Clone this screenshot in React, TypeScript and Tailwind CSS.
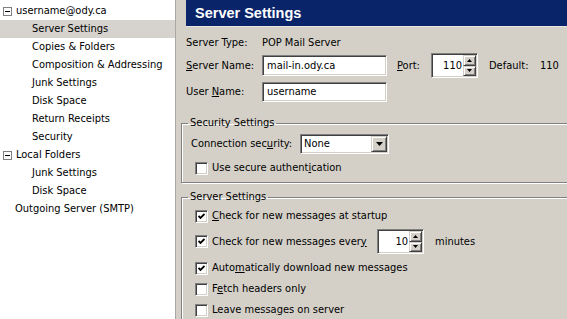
import React from 'react';

const font = { fontFamily: '"DejaVu Sans Condensed", "Liberation Sans", sans-serif' };

const sunken =
  'border border-t-[#808080] border-l-[#808080] border-b-white border-r-white shadow-[inset_1px_1px_0_#404040,inset_-1px_-1px_0_#d4d0c8] bg-white';
const raised =
  'bg-[#d4d0c8] border border-t-[#d4d0c8] border-l-[#d4d0c8] border-b-[#404040] border-r-[#404040] shadow-[inset_1px_1px_0_white,inset_-1px_-1px_0_#808080]';

function Minus() {
  return (
    <span className="w-[9px] h-[9px] border border-[#808080] bg-white flex items-center justify-center mr-[4px]">
      <span className="w-[5px] h-px bg-black" />
    </span>
  );
}

function Sidebar() {
  const child = 'h-[18px] flex items-center pl-[32px]';
  return (
    <div className="w-[176px] shrink-0 bg-white border-r border-[#a9a7a2] pt-[2px] text-black">
      <div className="h-[18px] flex items-center pl-[3px]">
        <Minus />
        username@ody.ca
      </div>
      <div className={child + ' bg-[#d6d3ce]'}>Server Settings</div>
      <div className={child}>Copies &amp; Folders</div>
      <div className={child}>Composition &amp; Addressing</div>
      <div className={child}>Junk Settings</div>
      <div className={child}>Disk Space</div>
      <div className={child}>Return Receipts</div>
      <div className={child}>Security</div>
      <div className="h-[18px] flex items-center pl-[3px]">
        <Minus />
        Local Folders
      </div>
      <div className={child}>Junk Settings</div>
      <div className={child}>Disk Space</div>
      <div className="h-[18px] flex items-center pl-[15px]">Outgoing Server (SMTP)</div>
    </div>
  );
}

function Arrow({ up }: { up?: boolean }) {
  return (
    <svg width="5" height="3" viewBox="0 0 5 3">
      <path d={up ? 'M2.5 0 L5 3 L0 3 Z' : 'M0 0 L5 0 L2.5 3 Z'} fill="black" />
    </svg>
  );
}

function Spinner({ value }: { value: string }) {
  return (
    <div className={sunken + ' w-[47px] h-[25px] flex p-px'}>
      <div className="flex-1 flex items-center justify-end pr-[1px]">{value}</div>
      <div className="w-[13px] flex flex-col">
        <div className={raised + ' flex-1 flex items-center justify-center'}>
          <Arrow up />
        </div>
        <div className={raised + ' flex-1 flex items-center justify-center'}>
          <Arrow />
        </div>
      </div>
    </div>
  );
}

function Check({ checked }: { checked?: boolean }) {
  return (
    <span className={sunken + ' w-[13px] h-[13px] shrink-0 flex items-center justify-center'}>
      {checked && (
        <svg width="7" height="7" viewBox="0 0 7 7">
          <path d="M0.5 3 L2.5 5 L6.5 1" stroke="black" strokeWidth="1.8" fill="none" />
        </svg>
      )}
    </span>
  );
}

function CheckRow({ checked, children, className = '' }: { checked?: boolean; children: React.ReactNode; className?: string }) {
  return (
    <div className={'flex items-center h-[14px] ml-[7px] ' + className}>
      <Check checked={checked} />
      <span className="ml-[4px]">{children}</span>
    </div>
  );
}

const groupBox = 'border border-[#808080] shadow-[1px_1px_0_white,inset_1px_1px_0_white] pl-[6px] w-[420px]';

export default function App() {
  return (
    <div className="w-[567px] h-[319px] flex overflow-hidden bg-[#d4d0c8] text-[11px] leading-[14px]" style={font}>
      <Sidebar />
      <div className="flex-1 pl-[10px] overflow-hidden text-black">
        <div className="h-[27px] bg-[#0a246a] border-b border-[#e8e6e2] w-[400px] flex items-center pl-[9px]">
          <span className="text-white font-bold text-[14.5px]" style={{ fontFamily: '"Liberation Sans", sans-serif' }}>
            Server Settings
          </span>
        </div>

        <div className="flex items-center h-[14px] mt-[9px]">
          <span className="w-[76px]">Server Type:</span>
          <span>POP Mail Server</span>
        </div>

        <div className="flex items-center h-[25px] mt-[3px]">
          <span className="w-[76px]">
            <u>S</u>erver Name:
          </span>
          <div className={sunken + ' w-[125px] h-[21px] flex items-center pl-[4px]'}>mail-in.ody.ca</div>
          <span className="ml-[10px] w-[34px]">
            <u>P</u>ort:
          </span>
          <Spinner value="110" />
          <span className="ml-[11px] w-[51px]">Default:</span>
          <span>110</span>
        </div>

        <div className="flex items-center h-[21px] mt-[3px]">
          <span className="w-[76px]">
            User <u>N</u>ame:
          </span>
          <div className={sunken + ' w-[125px] h-[20px] flex items-center pl-[4px]'}>username</div>
        </div>

        <fieldset className={groupBox + ' ml-[-5px] mt-[14px] pb-[7px]'}>
          <legend className="px-[2px]">Security Settings</legend>
          <div className="flex items-center h-[20px] mt-[4px] ml-[3px]">
            <span className="w-[109px]">
              Connection sec<u>u</u>rity:
            </span>
            <div className={sunken + ' w-[89px] h-[20px] flex items-center p-px'}>
              <span className="flex-1 pl-[2px]">None</span>
              <div className={raised + ' w-[16px] h-full flex items-center justify-center'}>
                <svg width="7" height="4" viewBox="0 0 7 4">
                  <path d="M0 0 L7 0 L3.5 4 Z" fill="black" />
                </svg>
              </div>
            </div>
          </div>
          <CheckRow className="mt-[7px] ml-[6px]">
            Use secure authent<u>i</u>cation
          </CheckRow>
        </fieldset>

        <fieldset className={groupBox + ' ml-[-5px] mt-[7px] pb-[10px]'}>
          <legend className="px-[2px]">Server Settings</legend>
          <CheckRow checked className="mt-[5px]">
            <u>C</u>heck for new messages at startup
          </CheckRow>
          <div className="flex items-center h-[25px] mt-[6px] ml-[7px]">
            <Check checked />
            <span className="ml-[4px] w-[165px]">
              Check for new messages ever<u>y</u>
            </span>
            <Spinner value="10" />
            <span className="ml-[11px]">minutes</span>
          </div>
          <CheckRow checked className="mt-[7px]">
            Auto<u>m</u>atically download new messages
          </CheckRow>
          <CheckRow className="mt-[7px]">
            F<u>e</u>tch headers only
          </CheckRow>
          <CheckRow className="mt-[7px]">
            Leave messa<u>g</u>es on server
          </CheckRow>
        </fieldset>
      </div>
    </div>
  );
}
